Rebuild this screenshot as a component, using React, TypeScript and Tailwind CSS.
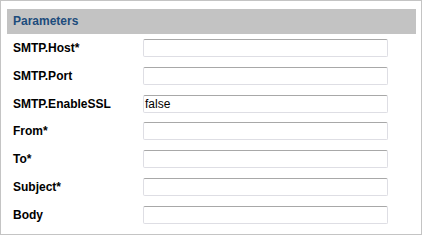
import React from "react";

const rows: { label: string; value?: string }[] = [
  { label: "SMTP.Host*" },
  { label: "SMTP.Port" },
  { label: "SMTP.EnableSSL", value: "false" },
  { label: "From*" },
  { label: "To*" },
  { label: "Subject*" },
  { label: "Body" },
];

export default function App() {
  return (
    <div className="w-[423px] h-[236px] bg-white" style={{ fontFamily: '"Liberation Sans", Arial, sans-serif' }}>
      <div className="w-[422px] h-[235px] border border-[#c4c4c4] bg-white pl-[6px] pt-[8px]">
        <div className="w-[409px] h-[25px] bg-[#c3c3c3] flex items-center pl-[6px] pb-[1px]">
          <span className="text-[12px] font-bold text-[#1d4c7c] leading-none">Parameters</span>
        </div>
        <div className="flex flex-col pt-[5px]">
          {rows.map((r) => (
            <div key={r.label} className="h-[27.8px] flex items-start">
              <div className="w-[136px] pl-[6px] pt-[3px] text-[12px] font-bold text-black leading-[12px]">{r.label}</div>
              <div className="w-[245px] h-[18px] rounded-[2px] border border-[#dedee4] border-t-[#a8a8a8] bg-white flex items-center pl-[1px] text-[12px] text-black leading-none">
                {r.value ?? ""}
              </div>
            </div>
          ))}
        </div>
      </div>
    </div>
  );
}
